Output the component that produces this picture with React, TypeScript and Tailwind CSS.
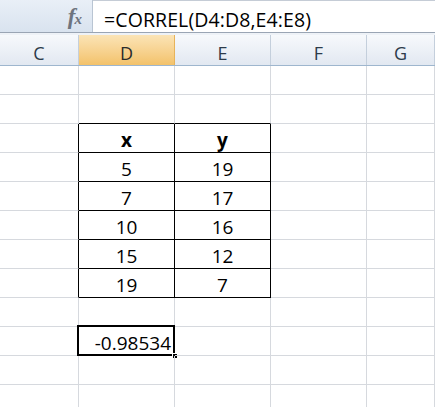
import React from "react";

const font = { fontFamily: '"Open Sans", "Noto Sans", Arial, sans-serif' };

type Cell = { text?: string; align?: "center" | "right"; r?: boolean; b?: boolean; active?: boolean; bold?: boolean };

const COLS = ["w-[79px]", "w-[96px]", "w-[96px]", "w-[96px]", "w-[68px]"];

function buildRows(): Cell[][] {
  const rows: Cell[][] = [];
  const blank = (): Cell[] => [{}, {}, {}, {}, {}];
  rows.push(blank());
  const r2 = blank();
  r2[1].b = true;
  r2[2].b = true;
  rows.push(r2);
  const data: [string, string][] = [
    ["x", "y"],
    ["5", "19"],
    ["7", "17"],
    ["10", "16"],
    ["15", "12"],
    ["19", "7"],
  ];
  data.forEach(([a, b], i) => {
    const r = blank();
    r[0].r = true;
    r[1] = { text: a, align: "center", r: true, b: true, bold: i === 0 };
    r[2] = { text: b, align: "center", r: true, b: true, bold: i === 0 };
    rows.push(r);
  });
  rows.push(blank());
  const r10 = blank();
  r10[1] = { text: "-0.98534", align: "right", active: true };
  rows.push(r10);
  rows.push(blank());
  rows.push(blank());
  return rows;
}

export default function App() {
  const rows = buildRows();
  const headers = ["C", "D", "E", "F", "G"];
  return (
    <div className="w-[435px] h-[407px] overflow-hidden bg-white" style={font}>
      {/* formula bar */}
      <div className="flex h-[33px] border-b border-[#9aa5b4] bg-white">
        <div className="w-[93px] h-full bg-gradient-to-b from-[#e9eff7] to-[#d9e3ef] border-r border-[#b9c5d3] flex items-center justify-end pr-[10px] pt-[1px]">
          <span
            className="text-[#6e747e] italic font-bold text-[23px] leading-none"
            style={{ fontFamily: '"Liberation Serif", "DejaVu Serif", serif' }}
          >
            f<span className="text-[15px] ml-[-1px]">x</span>
          </span>
        </div>
        <div className="flex-1 h-full border-t border-[#c5ccd6] flex items-center pl-[11px] pt-[6px] text-[19.5px] font-medium text-black tracking-[0.1px]">
          =CORREL(D4:D8,E4:E8)
        </div>
      </div>
      <div className="h-[2px] bg-[#eef2f7]" />
      {/* headers */}
      <div className="flex h-[31px] border-b border-[#9eb6ce]">
        {headers.map((h, i) => (
          <div
            key={h}
            className={`${COLS[i]} h-full flex items-center justify-center pt-[6px] text-[18px] border-r ${
              i === 1
                ? "bg-gradient-to-b from-[#fbe4b6] to-[#f3c26a] border-[#e7b35a] text-[#2b2b2b]"
                : "bg-gradient-to-b from-[#f7f9fc] to-[#e2e8f1] border-[#c4cfdc] text-[#2d3a4a]"
            }`}
          >
            {h}
          </div>
        ))}
      </div>
      {/* grid */}
      {rows.map((row, ri) => (
        <div key={ri} className="flex h-[29px]">
          {row.map((c, ci) => (
            <div
              key={ci}
              className={`${COLS[ci]} relative h-full border-r border-b flex items-center pt-[4px] text-[19px] text-black ${
                c.bold ? "font-bold" : "font-medium"
              } ${c.r ? "border-r-black" : "border-r-[#d6d9de]"} ${c.b ? "border-b-black" : "border-b-[#d6d9de]"} ${
                c.align === "center" ? "justify-center" : c.align === "right" ? "justify-end pr-[3px]" : ""
              }`}
            >
              {c.text}
              {c.active && (
                <>
                  <div className="absolute left-[-2px] top-[-2px] w-[98px] h-[31px] border-2 border-black pointer-events-none" />
                  <div className="absolute right-[-4px] bottom-[-4px] w-[6px] h-[6px] bg-black border border-white" />
                </>
              )}
            </div>
          ))}
        </div>
      ))}
    </div>
  );
}
